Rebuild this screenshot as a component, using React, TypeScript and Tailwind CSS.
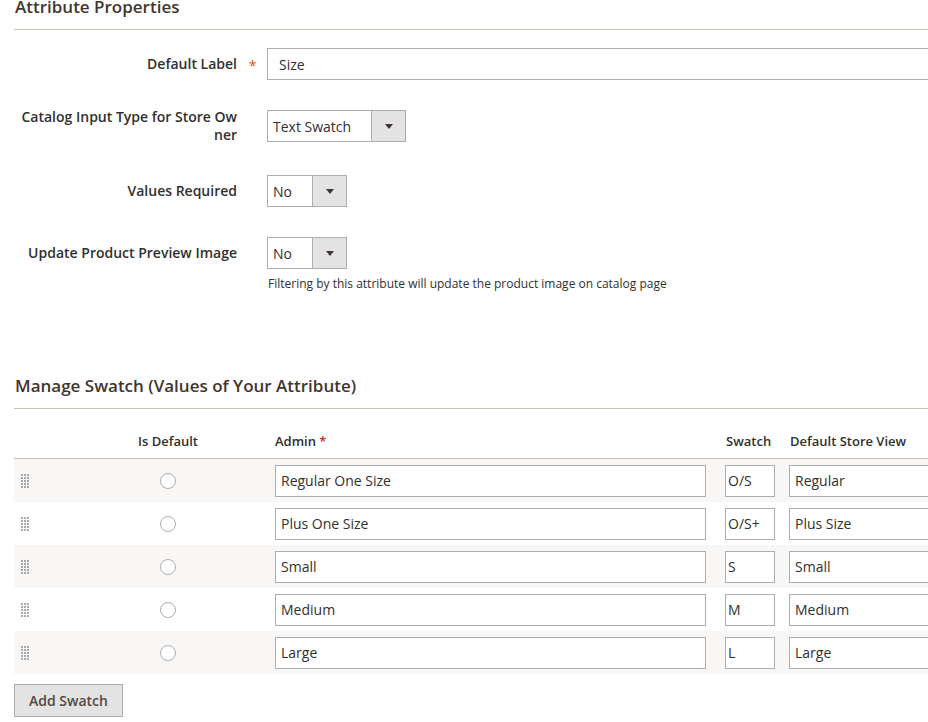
import React from "react";

const font = { fontFamily: '"Open Sans", "Liberation Sans", sans-serif' };

function SectionTitle({ children }: { children: React.ReactNode }) {
  return (
    <div className="flex flex-col h-[30px] border-b border-[#cac3b4] box-border">
      <div className="text-[17px] leading-[20px] font-semibold text-[#41362f] -mt-[3px] pl-[1px]">
        {children}
      </div>
    </div>
  );
}

function Select({ value, width, btn }: { value: string; width: string; btn?: string }) {
  return (
    <div className={`flex h-[32px] border border-[#adadad] bg-white box-border ${width}`}>
      <div className="flex-1 flex items-center pl-[5px] text-[14px] text-[#303030]">{value}</div>
      <div className={`flex items-center justify-center bg-[#e3e3e3] border-l border-[#adadad] ${btn ?? "w-[34px]"}`}>
        <div className="w-0 h-0 border-l-[4px] border-r-[4px] border-t-[5px] border-l-transparent border-r-transparent border-t-[#41362f]" />
      </div>
    </div>
  );
}

function Handle() {
  const dots = Array.from({ length: 15 });
  return (
    <div className="grid grid-cols-3 gap-[1px] w-[8px]">
      {dots.map((_, i) => (
        <div key={i} className="w-[2px] h-[2px] bg-[#a9a9a9]" />
      ))}
    </div>
  );
}

const rows = [
  { admin: "Regular One Size", swatch: "O/S", store: "Regular" },
  { admin: "Plus One Size", swatch: "O/S+", store: "Plus Size" },
  { admin: "Small", swatch: "S", store: "Small" },
  { admin: "Medium", swatch: "M", store: "Medium" },
  { admin: "Large", swatch: "L", store: "Large" },
];

export default function App() {
  return (
    <div className="w-[928px] h-[722px] overflow-hidden bg-white pl-[14px] text-[#303030]" style={font}>
      <div className="w-[1000px] flex flex-col">
        <SectionTitle>Attribute Properties</SectionTitle>

        {/* Default Label */}
        <div className="flex items-center mt-[18px]">
          <div className="w-[223px] text-right text-[14px] font-semibold leading-[18px]">Default Label</div>
          <div className="w-[30px] text-center text-[14px] text-[#eb5202] pl-[1px] pt-[3px]">*</div>
          <div className="h-[32px] w-[700px] border border-[#adadad] box-border flex items-center pl-[11px] text-[14px]">
            Size
          </div>
        </div>

        {/* Catalog input type */}
        <div className="flex items-center mt-[28px]">
          <div className="w-[223px] text-right text-[14px] font-semibold leading-[18px]">
            Catalog Input Type for Store Ow
            <br />
            ner
          </div>
          <div className="w-[30px]" />
          <Select value="Text Swatch" width="w-[139px]" />
        </div>

        {/* Values required */}
        <div className="flex items-center mt-[31px]">
          <div className="w-[223px] text-right text-[14px] font-semibold leading-[18px]">Values Required</div>
          <div className="w-[30px]" />
          <Select value="No" width="w-[80px]" />
        </div>

        {/* Update product preview */}
        <div className="flex items-center mt-[30px]">
          <div className="w-[223px] text-right text-[14px] font-semibold leading-[18px]">Update Product Preview Image</div>
          <div className="w-[30px]" />
          <Select value="No" width="w-[80px]" />
        </div>
        <div className="ml-[254px] mt-[7px] text-[12px] leading-[16px]">
          Filtering by this attribute will update the product image on catalog page
        </div>

        <div className="mt-[87px]">
          <SectionTitle>Manage Swatch (Values of Your Attribute)</SectionTitle>
        </div>

        {/* table header */}
        <div className="flex h-[50px] items-end pb-[8px] border-b border-[#cac3b4] box-border text-[13px] font-semibold leading-[18px]">
          <div className="w-[50px]" />
          <div className="w-[208px] text-center">Is Default</div>
          <div className="w-[453px] pl-[3px]">
            Admin <span className="text-[#e22626]">*</span>
          </div>
          <div className="w-[64px] pl-[1px]">Swatch</div>
          <div className="pl-[1px]">Default Store View</div>
        </div>

        {rows.map((r, i) => (
          <div key={i} className={`flex items-center h-[43px] ${i % 2 === 0 ? "bg-[#f8f7f5]" : "bg-white"}`}>
            <div className="w-[50px] pl-[7px]">
              <Handle />
            </div>
            <div className="w-[208px] flex justify-center">
              <div className="w-[16px] h-[16px] rounded-full border border-[#adadad] bg-white box-border" />
            </div>
            <div className="w-[453px] pl-[3px] pr-[19px]">
              <div className="h-[32px] border border-[#adadad] bg-white box-border flex items-center pl-[5px] text-[14px]">
                {r.admin}
              </div>
            </div>
            <div className="w-[64px]">
              <div className="h-[32px] w-[50px] border border-[#adadad] bg-white box-border flex items-center pl-[2px] text-[14px]">
                {r.swatch}
              </div>
            </div>
            <div>
              <div className="h-[32px] w-[200px] border border-[#adadad] bg-white box-border flex items-center pl-[5px] text-[14px]">
                {r.store}
              </div>
            </div>
          </div>
        ))}

        <div>
          <button className="mt-[10px] h-[33px] w-[109px] bg-[#e3e3e3] border border-[#adadad] box-border text-[14px] font-semibold text-[#514943] flex items-center justify-center">
            Add Swatch
          </button>
        </div>
      </div>
    </div>
  );
}
